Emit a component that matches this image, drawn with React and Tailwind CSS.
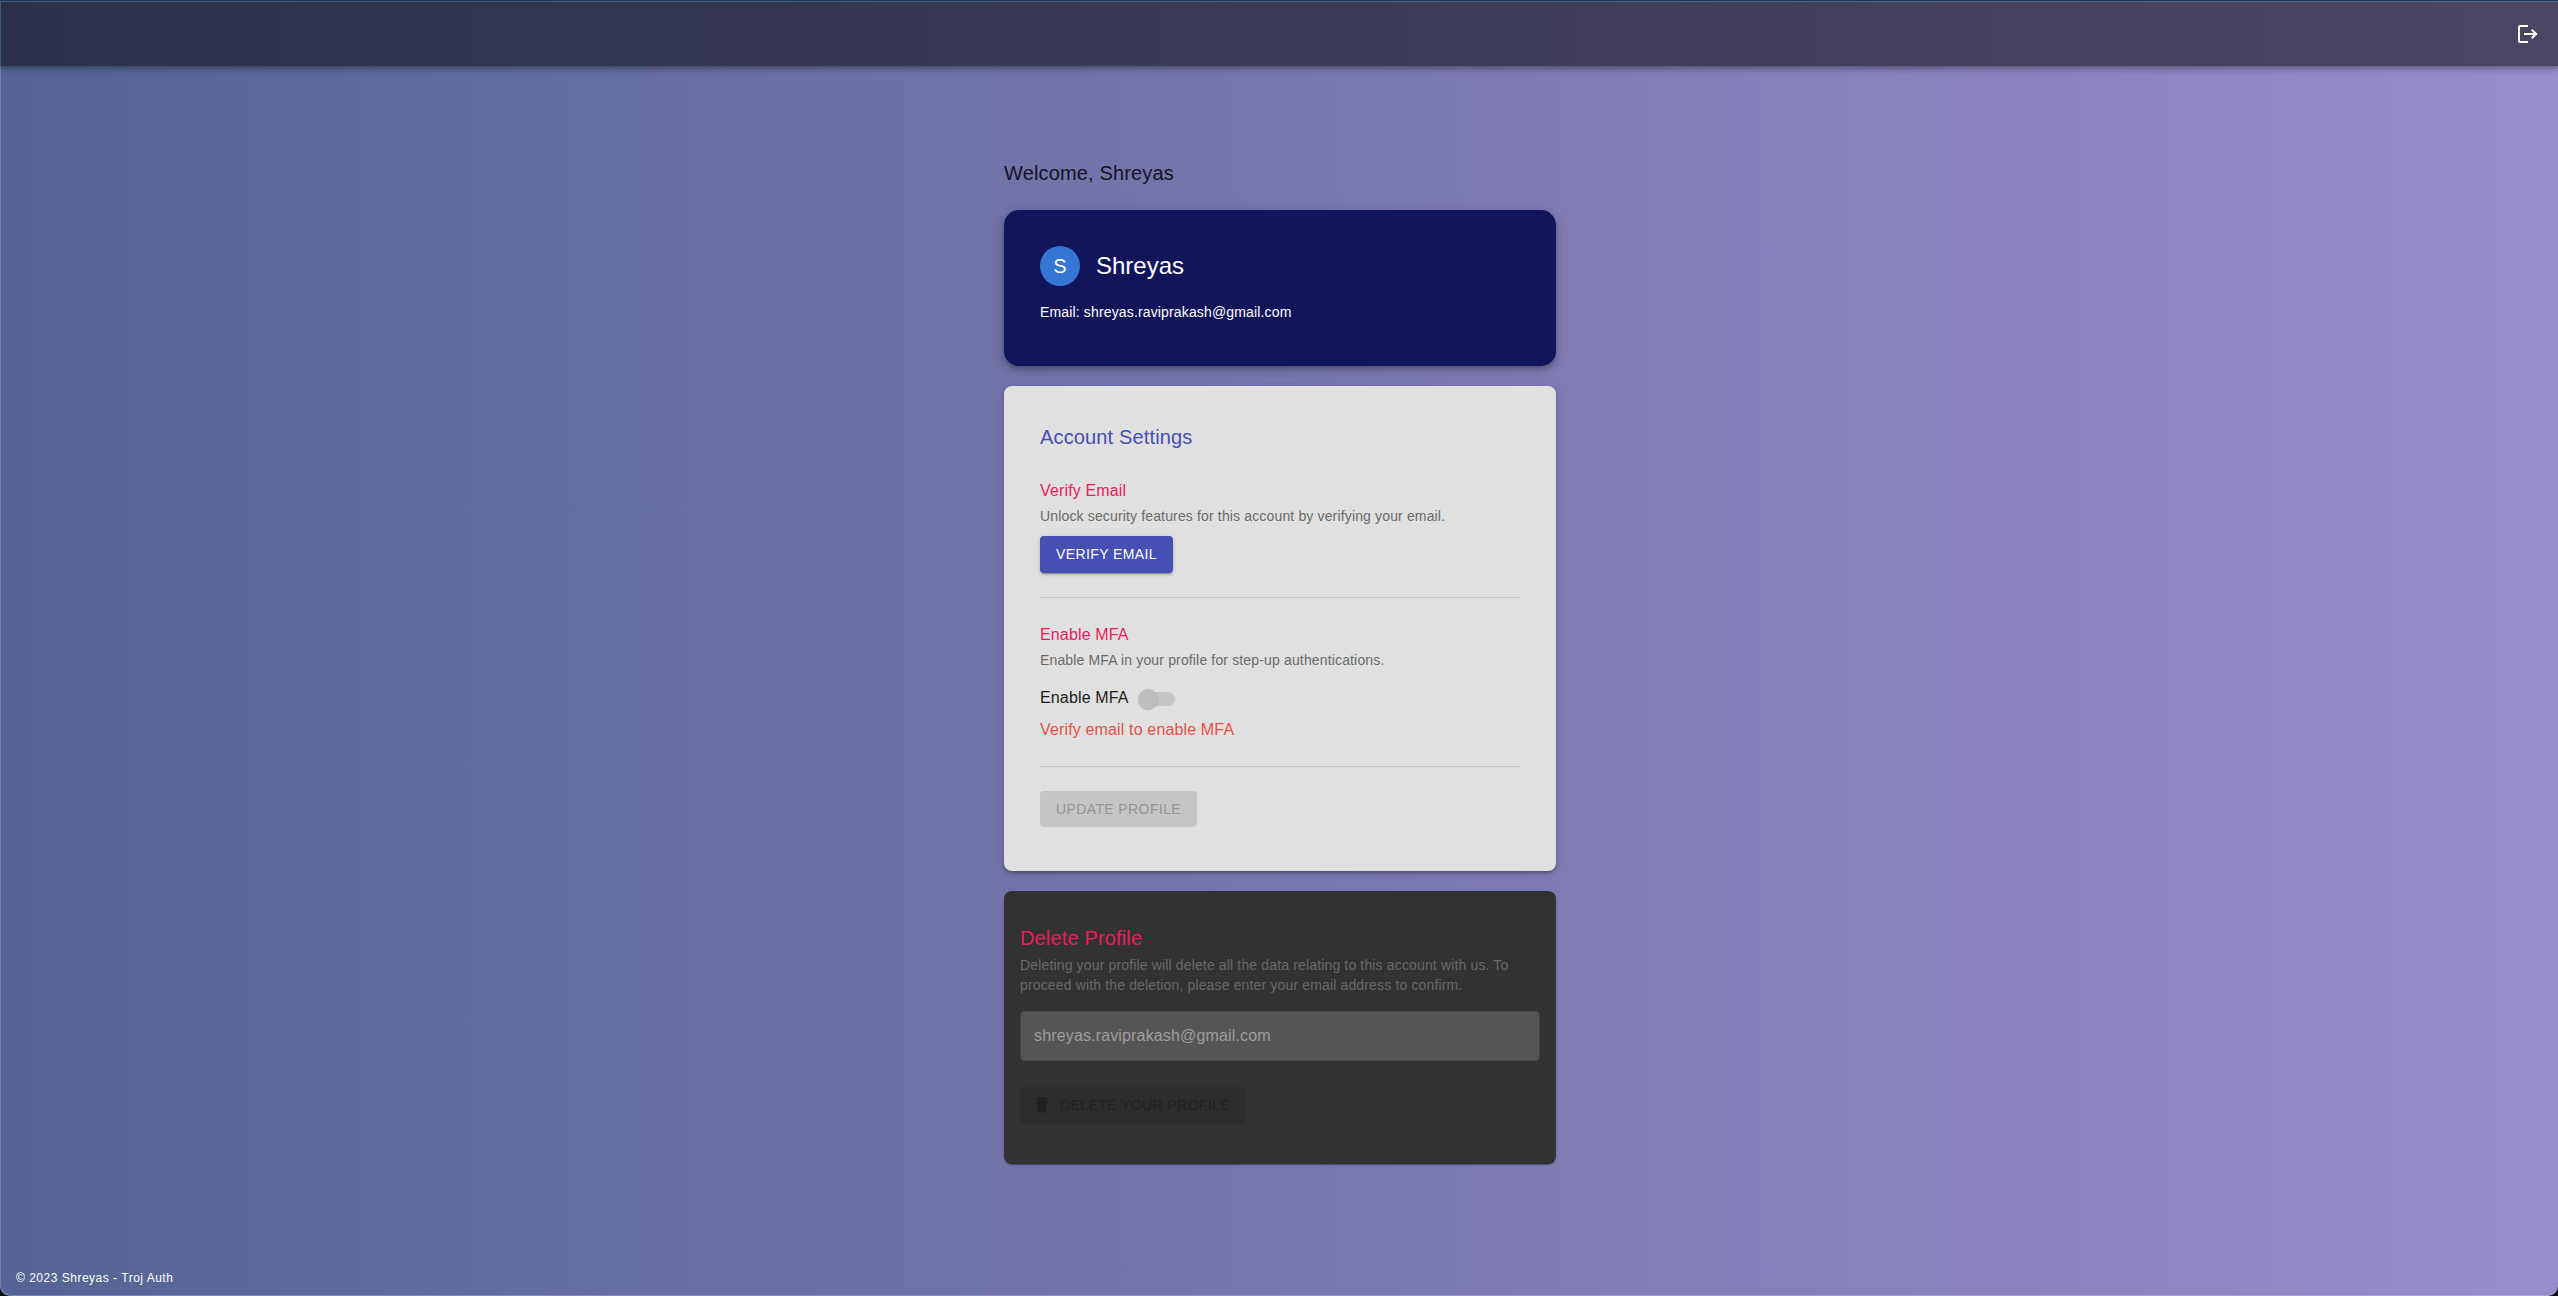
function Switch() {
  return (
    <span className="relative inline-flex h-[38px] w-[58px] items-center p-3">
      <span className="h-[14px] w-[34px] rounded-full bg-[#c5c5c5]" />
      <span className="absolute top-[9px] left-[9px] size-5 rounded-full bg-[#bdbdbd] shadow-[0_2px_1px_-1px_rgba(0,0,0,0.1),0_1px_1px_0_rgba(0,0,0,0.08),0_1px_3px_0_rgba(0,0,0,0.06)]" />
    </span>
  );
}

function Header() {
  return (
    <header className="relative flex h-[66px] items-center justify-end border-t border-[#1b3560] bg-[linear-gradient(90deg,#2b3149,#4c4564)] pt-px pr-5 shadow-[inset_1px_1px_0_rgba(110,150,190,0.4),0_2px_4px_-1px_rgba(0,0,0,0.2),0_4px_5px_0_rgba(0,0,0,0.14),0_1px_10px_0_rgba(0,0,0,0.12)]">
      <svg className="h-[18px] w-[20px]" viewBox="0 0 20 18" fill="none" stroke="#fff" strokeWidth="2">
        <path d="M10 1H2Q1 1 1 2V16Q1 17 2 17H10" />
        <path d="M6 9H18M13.7 4.700L18.200 9L13.7 13.300" />
      </svg>
    </header>
  );
}

function Profile() {
  return (
    <section className="h-[156px] rounded-[15px] bg-[#12155a] p-9 text-white shadow-[0_3px_5px_-1px_rgba(0,0,0,0.2),0_5px_8px_0_rgba(0,0,0,0.14),0_1px_14px_0_rgba(0,0,0,0.1)]">
      <div className="flex items-center gap-4">
        <div className="flex size-10 items-center justify-center rounded-full bg-[#3575d3] text-xl leading-none">S</div>
        <h2 className="text-2xl leading-8">Shreyas</h2>
      </div>
      <p className="mt-4 text-sm leading-5 tracking-[0.01071em]">Email: shreyas.raviprakash@gmail.com</p>
    </section>
  );
}

function Settings() {
  return (
    <section className="mt-5 h-[485px] rounded-lg bg-[#e0e0e0] px-9 pt-[35px] shadow-[0_3px_3px_-2px_rgba(0,0,0,0.2),0_3px_4px_0_rgba(0,0,0,0.14),0_1px_8px_0_rgba(0,0,0,0.12)]">
      <h2 className="text-xl leading-8 tracking-[0.0075em] text-[#454fb4]">Account Settings</h2>
      <h3 className="mt-[26px] text-base leading-6 tracking-[0.00938em] text-[#ec1c5c]">Verify Email</h3>
      <p className="mt-[3px] text-sm leading-5 tracking-[0.01071em] text-[#6b6b6b]">Unlock security features for this account by verifying your email.</p>
      <button className="mt-2.5 block h-[37px] w-[133px] rounded bg-[#454fb4] pb-px text-sm tracking-[0.02857em] text-white shadow-[0_3px_1px_-2px_rgba(0,0,0,0.2),0_2px_2px_0_rgba(0,0,0,0.14),0_1px_5px_0_rgba(0,0,0,0.12)]">VERIFY EMAIL</button>
      <hr className="mt-6 border-[#c6c6c6]" />
      <h3 className="mt-[25px] text-base leading-6 tracking-[0.00938em] text-[#ec1c5c]">Enable MFA</h3>
      <p className="mt-[3px] text-sm leading-5 tracking-[0.01071em] text-[#6b6b6b]">Enable MFA in your profile for step-up authentications.</p>
      <div className="mt-2.5 flex h-[38px] items-center text-base leading-6 tracking-[0.00938em] text-[#1c1c1c]">
        <span className="w-[89px] pb-[3px]">Enable MFA</span>
        <Switch />
      </div>
      <p className="text-base leading-6 tracking-[0.00938em] text-[#eb5044]">Verify email to enable MFA</p>
      <hr className="mt-6 border-[#c6c6c6]" />
      <button className="mt-6 block h-9 w-[157px] rounded bg-[#c5c5c5] text-sm tracking-[0.02857em] text-[#959595]">UPDATE PROFILE</button>
    </section>
  );
}

function DeleteProfile() {
  return (
    <section className="mt-5 h-[273px] rounded-lg bg-[#323232] px-4 pt-[31px] shadow-[0_2px_1px_-1px_rgba(0,0,0,0.2),0_1px_1px_0_rgba(0,0,0,0.14),0_1px_3px_0_rgba(0,0,0,0.12)]">
      <h2 className="text-xl leading-8 tracking-[0.0075em] text-[#ec1c5c]">Delete Profile</h2>
      <p className="mt-px text-sm leading-5 tracking-[0.01071em] text-[#696969]">Deleting your profile will delete all the data relating to this account with us. To proceed with the deletion, please enter your email address to confirm.</p>
      <div className="mt-4 flex h-[50px] items-center rounded border border-[#464646] bg-[#555555] px-[13px] text-base tracking-[0.00938em] text-[#9d9d9d]">shreyas.raviprakash@gmail.com</div>
      <button className="mt-[26px] flex h-[37px] w-[226px] items-center rounded bg-[#2d2d2d] pb-px pl-3 text-sm tracking-[0.02857em] text-[#212121]">
        <svg className="mr-2 size-5" viewBox="0 0 24 24" fill="currentColor">
          <path d="M6 19c0 1.1.9 2 2 2h8c1.1 0 2-.9 2-2V7H6v12zM19 4h-3.500l-1-1h-5l-1 1H5v2h14V4z" />
        </svg>
        DELETE YOUR PROFILE
      </button>
    </section>
  );
}

export default function App() {
  return (
    <div className="h-[1296px] w-[2558px] bg-[#111111] font-['Liberation_Sans',Arial,sans-serif]">
      <div className="flex h-full flex-col overflow-hidden rounded-b-[10px] bg-[linear-gradient(90deg,#556494,#7877af_50%,#998dcb)] shadow-[inset_1px_-1px_0_rgba(255,255,255,0.2)]">
        <Header />
        <main className="mx-auto w-[554px] grow pt-[91px] pl-[2px]">
          <h1 className="mb-[21px] text-xl leading-8 tracking-[0.0075em] text-[#14141c]">Welcome, Shreyas</h1>
          <Profile />
          <Settings />
          <DeleteProfile />
        </main>
        <footer className="pb-2 pl-4 text-xs leading-5 tracking-[0.042em] text-white">© 2023 Shreyas - Troj Auth</footer>
      </div>
    </div>
  );
}
